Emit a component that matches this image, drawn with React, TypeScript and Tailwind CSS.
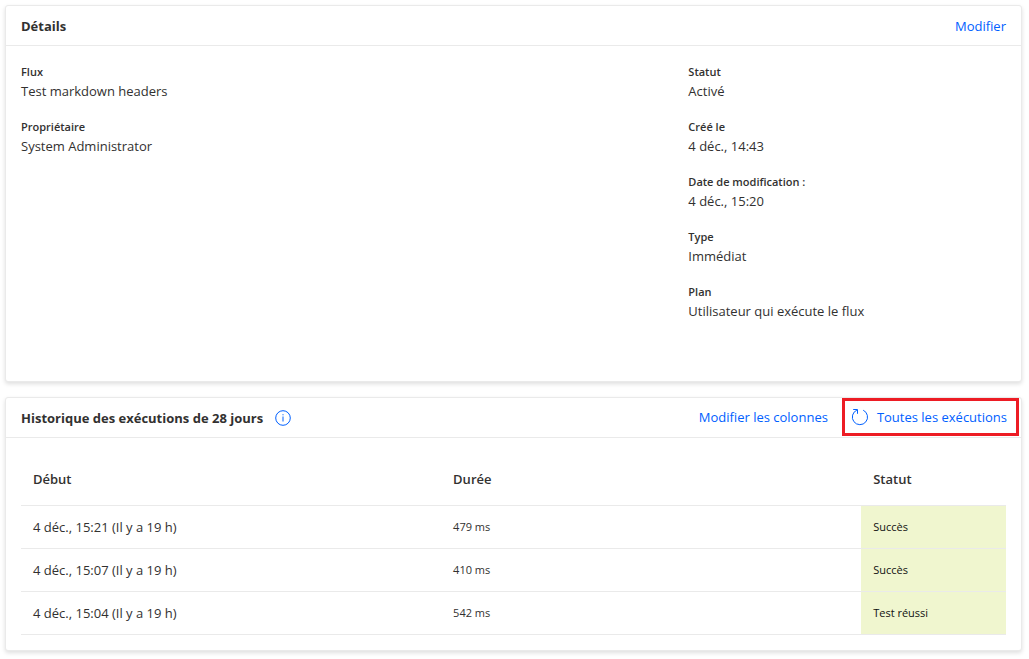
import React from "react";

interface Field {
  label: string;
  value: string;
}

interface Run {
  start: string;
  duration: string;
  status: string;
}

const leftFields: Field[] = [
  { label: "Flux", value: "Test markdown headers" },
  { label: "Propriétaire", value: "System Administrator" },
];

const rightFields: Field[] = [
  { label: "Statut", value: "Activé" },
  { label: "Créé le", value: "4 déc., 14:43" },
  { label: "Date de modification :", value: "4 déc., 15:20" },
  { label: "Type", value: "Immédiat" },
  { label: "Plan", value: "Utilisateur qui exécute le flux" },
];

const runs: Run[] = [
  { start: "4 déc., 15:21 (Il y a 19 h)", duration: "479 ms", status: "Succès" },
  { start: "4 déc., 15:07 (Il y a 19 h)", duration: "410 ms", status: "Succès" },
  { start: "4 déc., 15:04 (Il y a 19 h)", duration: "542 ms", status: "Test réussi" },
];

function InfoIcon() {
  return (
    <svg width="16" height="16" viewBox="0 0 16 16" fill="none" stroke="currentColor" aria-hidden="true">
      <circle cx="8" cy="8" r="7.3" />
      <path d="M8 6.5V11.5M8 4.2V5.3" />
    </svg>
  );
}

function RefreshIcon() {
  return (
    <svg width="18" height="18" viewBox="0 0 18 18" fill="none" stroke="currentColor" aria-hidden="true">
      <path d="M12.2 2.2A7.6 7.6 0 1 1 5.9 2.1" />
      <path d="M2.2 1.5H6.5V5.8" />
    </svg>
  );
}

function FieldList({ fields }: { fields: Field[] }) {
  return (
    <dl className="flex flex-col gap-4">
      {fields.map((f) => (
        <div key={f.label}>
          <dt className="text-[11px] font-semibold leading-[19px]">{f.label}</dt>
          <dd className="text-[13px] leading-5">{f.value}</dd>
        </div>
      ))}
    </dl>
  );
}

function Card({ header, children }: { header: React.ReactNode; children: React.ReactNode }) {
  return (
    <section className="rounded-[3px] border border-[#eaeaea] bg-white shadow-[0_2px_4px_rgba(0,0,0,0.13)]">
      <header className="flex h-10 items-center justify-between border-b border-[#eaeaea] px-[15px]">{header}</header>
      {children}
    </section>
  );
}

export default function App() {
  return (
    <main className="flex flex-col gap-[15px] bg-white pt-[5px] pr-[7px] pb-2 pl-[5px] font-['Open_Sans','Noto_Sans',sans-serif] text-[#323130]">
      <Card
        header={
          <>
            <h2 className="text-[13px] font-bold leading-5">Détails</h2>
            <button type="button" className="cursor-pointer text-[13px] leading-5 text-[#0060ff]">
              Modifier
            </button>
          </>
        }
      >
        <div className="grid grid-cols-[2fr_1fr] gap-8 px-[15px] pt-4 pb-[60px]">
          <FieldList fields={leftFields} />
          <FieldList fields={rightFields} />
        </div>
      </Card>

      <Card
        header={
          <>
            <div className="flex items-center gap-3">
              <h2 className="text-[13px] font-bold leading-5">Historique des exécutions de 28 jours</h2>
              <button type="button" aria-label="Informations" className="cursor-pointer text-[#0060ff]">
                <InfoIcon />
              </button>
            </div>
            <div className="-mr-[13px] flex items-center gap-[14px] self-start text-[13px] leading-5 text-[#0060ff]">
              <button type="button" className="cursor-pointer">
                Modifier les colonnes
              </button>
              <button
                type="button"
                className="flex h-[38px] cursor-pointer items-center gap-2 border-[3px] border-[#ed1c24] pr-[9px] pl-[6px]"
              >
                <RefreshIcon />
                Toutes les exécutions
              </button>
            </div>
          </>
        }
      >
        <div className="px-[15px] pt-[15px] pb-[15px]">
          <table className="w-full table-fixed border-collapse text-left">
            <thead>
              <tr className="h-[52px] border-b border-[#eaeaea] text-[13px]">
                <th className="w-[42.65%] px-3 pt-0.5 font-semibold">Début</th>
                <th className="w-[42.65%] px-3 pt-0.5 font-semibold">Durée</th>
                <th className="px-3 pt-0.5 font-semibold">Statut</th>
              </tr>
            </thead>
            <tbody>
              {runs.map((run) => (
                <tr key={run.start} className="h-[43px] border-b border-[#eaeaea] text-[11px]">
                  <td className="px-3 pt-0.5 text-[13px]">{run.start}</td>
                  <td className="px-3 pt-0.5">{run.duration}</td>
                  <td className="bg-[#f0f6cf] px-3 pt-0.5 text-[#111111]">{run.status}</td>
                </tr>
              ))}
            </tbody>
          </table>
        </div>
      </Card>
    </main>
  );
}
